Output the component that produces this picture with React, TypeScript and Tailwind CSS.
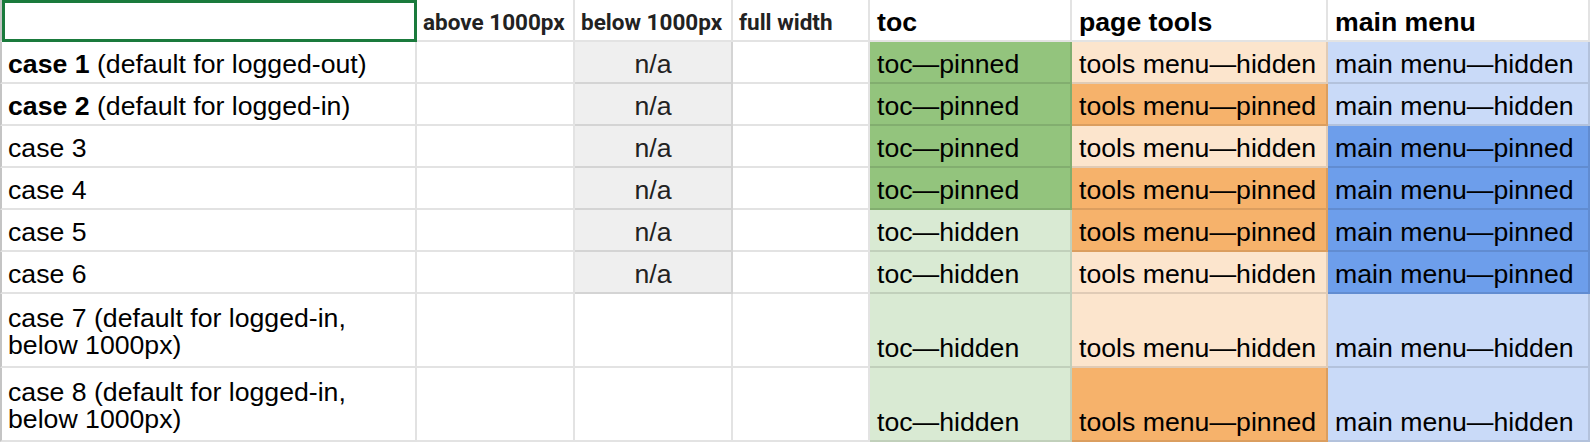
import React from 'react';

type State = 'pinned' | 'hidden';

type Row = {
  bold?: string;
  rest: string;
  second?: string;
  na: boolean;
  toc: State;
  tools: State;
  main: State;
};

const rows: Row[] = [
  { bold: 'case 1', rest: ' (default for logged-out)', na: true, toc: 'pinned', tools: 'hidden', main: 'hidden' },
  { bold: 'case 2', rest: ' (default for logged-in)', na: true, toc: 'pinned', tools: 'pinned', main: 'hidden' },
  { rest: 'case 3', na: true, toc: 'pinned', tools: 'hidden', main: 'pinned' },
  { rest: 'case 4', na: true, toc: 'pinned', tools: 'pinned', main: 'pinned' },
  { rest: 'case 5', na: true, toc: 'hidden', tools: 'pinned', main: 'pinned' },
  { rest: 'case 6', na: true, toc: 'hidden', tools: 'hidden', main: 'pinned' },
  { rest: 'case 7 (default for logged-in,', second: 'below 1000px)', na: false, toc: 'hidden', tools: 'hidden', main: 'hidden' },
  { rest: 'case 8 (default for logged-in,', second: 'below 1000px)', na: false, toc: 'hidden', tools: 'pinned', main: 'hidden' },
];

const tocBg = { pinned: 'bg-[#93c47d]', hidden: 'bg-[#d9ead3]' };
const toolsBg = { pinned: 'bg-[#f6b26b]', hidden: 'bg-[#fce5cd]' };
const mainBg = { pinned: 'bg-[#6d9eeb]', hidden: 'bg-[#c9daf8]' };

const cell = 'flex items-end border-r-2 border-b-2 border-[rgba(0,0,0,0.11)] overflow-hidden whitespace-nowrap pb-[3px] leading-[30px]';

function Cell({ bg = 'bg-white', className = '', children }: { bg?: string; className?: string; children?: React.ReactNode }) {
  return <div className={`${cell} ${bg} ${className}`}>{children}</div>;
}

export default function App() {
  return (
    <div className="w-[1590px] h-[442px] overflow-hidden bg-white font-['Liberation_Sans',Arial,sans-serif] text-[26.67px] text-black">
      <div className="grid grid-cols-[417px_158px_158px_137px_202px_256px_262px] grid-rows-[42px_repeat(6,42px)_74px_74px]">
        {/* header */}
        <div className="relative border-l-2 border-l-[#c4c4c4] border-r-2 border-b-2 border-[rgba(0,0,0,0.11)] bg-white">
          <div className="absolute left-0 top-0 right-[-2px] bottom-[-2px] border-[3px] border-[#1a7a3c]" />
        </div>
        {['above 1000px', 'below 1000px', 'full width'].map((h) => (
          <Cell key={h} className="pl-[6px] font-['Roboto',sans-serif] font-bold text-[22.5px] text-[#222]">
            {h}
          </Cell>
        ))}
        {['toc', 'page tools', 'main menu'].map((h) => (
          <Cell key={h} className="pl-[7px] font-bold">
            {h}
          </Cell>
        ))}

        {rows.map((r, i) => {
          const tall = !!r.second;
          return (
            <React.Fragment key={i}>
              {tall ? (
                <div className="flex flex-col justify-center border-l-2 border-l-[#c4c4c4] border-r-2 border-b-2 border-[rgba(0,0,0,0.11)] bg-white pl-[6px] pt-[3px] leading-[27px] whitespace-nowrap">
                  <span>{r.rest}</span>
                  <span>{r.second}</span>
                </div>
              ) : (
                <Cell className="border-l-2 border-l-[#c4c4c4] pl-[6px]">
                  {r.bold && <b>{r.bold}</b>}
                  <span className="whitespace-pre">{r.rest}</span>
                </Cell>
              )}
              <Cell />
              <Cell bg={r.na ? 'bg-[#efefef]' : 'bg-white'} className="justify-center text-[#222]">
                {r.na ? 'n/a' : ''}
              </Cell>
              <Cell />
              <Cell bg={tocBg[r.toc]} className="pl-[7px]">toc—{r.toc}</Cell>
              <Cell bg={toolsBg[r.tools]} className="pl-[7px]">tools menu—{r.tools}</Cell>
              <Cell bg={mainBg[r.main]} className="pl-[7px]">main menu—{r.main}</Cell>
            </React.Fragment>
          );
        })}
      </div>
    </div>
  );
}
